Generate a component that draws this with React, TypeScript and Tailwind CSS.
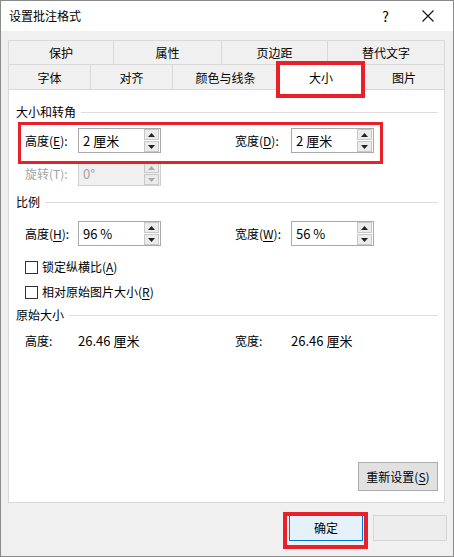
import React from 'react';

const font = { fontFamily: '"Noto Sans CJK SC", "Noto Sans", sans-serif' };

const Arrow = ({ up, disabled }: { up?: boolean; disabled?: boolean }) => (
  <svg width="7" height="4" viewBox="0 0 7 4">
    <path d={up ? 'M0 4 L3.5 0 L7 4 Z' : 'M0 0 L3.5 4 L7 0 Z'} fill={disabled ? '#a8a8a8' : '#222'} />
  </svg>
);

const Spin = ({ value, disabled }: { value: string; disabled?: boolean }) => (
  <div
    className={`w-[83px] h-[25px] border flex items-center justify-between ${
      disabled ? 'bg-[#f0f0f0] border-[#cfcfcf] text-[#a3a3a3]' : 'bg-white border-[#a9a9a9] text-black'
    }`}
  >
    <span className="pl-[4px] text-[13px] leading-none">{value}</span>
    <div className="flex flex-col gap-[1px] mr-[1px] h-[23px] w-[15px]">
      <div className="flex-1 flex items-center justify-center bg-[#ebebeb] border border-[#c8c8c8]">
        <Arrow up disabled={disabled} />
      </div>
      <div className="flex-1 flex items-center justify-center bg-[#ebebeb] border border-[#c8c8c8]">
        <Arrow disabled={disabled} />
      </div>
    </div>
  </div>
);

const Heading = ({ text }: { text: string }) => (
  <div className="h-[20px] flex items-center pl-[7px] pr-[6px] gap-[5px]">
    <span className="text-[12px] text-black whitespace-nowrap">{text}</span>
    <div className="flex-1 h-px bg-[#dcdcdc]" />
  </div>
);

const U = ({ c }: { c: string }) => <span className="underline underline-offset-2">{c}</span>;

const Check = ({ children }: { children: React.ReactNode }) => (
  <div className="h-[20px] flex items-center pl-[16px] gap-[4px] text-[12px]">
    <div className="w-[13px] h-[13px] border border-[#333] bg-white" />
    <span>{children}</span>
  </div>
);

export default function App() {
  const row1 = [
    { t: '保护', w: 'w-[105px]' },
    { t: '属性', w: 'w-[108px]' },
    { t: '页边距', w: 'w-[106px]' },
    { t: '替代文字', w: 'flex-1' },
  ];

  return (
    <div style={font} className="relative w-[454px] h-[557px] bg-[#f0f0f0] border border-[#8a8a8a] flex flex-col text-black overflow-hidden">
      {/* title bar */}
      <div className="h-[30px] bg-white flex items-center justify-between pl-[8px] pr-[19px] shrink-0">
        <span className="text-[12px]">设置批注格式</span>
        <div className="flex items-center gap-[33px]">
          <span className="text-[14px]">?</span>
          <svg width="12" height="12" viewBox="0 0 12 12">
            <path d="M0.5 0.5 L11.5 11.5 M11.5 0.5 L0.5 11.5" stroke="#111" strokeWidth="1.1" />
          </svg>
        </div>
      </div>

      <div className="flex-1 flex flex-col pt-[9px] pl-[7px] pr-[8px]">
        {/* tabs */}
        <div className="flex h-[24px] border-t border-l border-r border-[#d9d9d9] text-[12px]">
          {row1.map((tab, i) => (
            <div
              key={tab.t}
              className={`${tab.w} flex items-center justify-center ${i < 3 ? 'border-r border-[#d9d9d9]' : ''}`}
            >
              {tab.t}
            </div>
          ))}
        </div>
        <div className="flex h-[26px] border-t border-l border-r border-[#d9d9d9] text-[12px]">
          <div className="w-[82px] flex items-center justify-center border-r border-[#d9d9d9]">字体</div>
          <div className="w-[82px] flex items-center justify-center border-r border-[#d9d9d9]">对齐</div>
          <div className="w-[105px] flex items-center justify-center">颜色与线条</div>
          <div className="relative z-10 w-[86px] -mt-[3px] h-[30px] bg-white border-l border-r border-t border-[#d9d9d9] flex items-center justify-center">
            大小
          </div>
          <div className="flex-1 flex items-center justify-center">图片</div>
        </div>

        {/* panel */}
        <div className="h-[414px] -mt-px bg-white border border-[#d9d9d9] flex flex-col text-[12px]">
          <div className="mt-[12px]">
            <Heading text="大小和转角" />
          </div>
          <div className="mt-[6px] flex items-center h-[25px] pl-[16px]">
            <span className="w-[53px]">高度(<U c="E" />):</span>
            <Spin value="2 厘米" />
            <span className="ml-[74px] w-[56px]">宽度(<U c="D" />):</span>
            <Spin value="2 厘米" />
          </div>
          <div className="mt-[8px] flex items-center h-[25px] pl-[16px]">
            <span className="w-[53px] text-[#a3a3a3]">旋转(T):</span>
            <Spin value="0°" disabled />
          </div>
          <div className="mt-[6px]">
            <Heading text="比例" />
          </div>
          <div className="mt-[9px] flex items-center h-[25px] pl-[16px]">
            <span className="w-[53px]">高度(<U c="H" />):</span>
            <Spin value="96 %" />
            <span className="ml-[74px] w-[56px]">宽度(<U c="W" />):</span>
            <Spin value="56 %" />
          </div>
          <div className="mt-[11px]">
            <Check>锁定纵横比(<U c="A" />)</Check>
          </div>
          <div className="mt-[5px]">
            <Check>相对原始图片大小(<U c="R" />)</Check>
          </div>
          <div className="mt-[3px]">
            <Heading text="原始大小" />
          </div>
          <div className="mt-[6px] flex items-center h-[20px] pl-[16px]">
            <span className="w-[53px]">高度:</span>
            <span className="w-[83px] text-[13px]">26.46 厘米</span>
            <span className="ml-[74px] w-[56px]">宽度:</span>
            <span className="text-[13px]">26.46 厘米</span>
          </div>
          <div className="flex-1" />
          <div className="flex justify-end pr-[6px] pb-[11px]">
            <div className="w-[80px] h-[29px] bg-[#e1e1e1] border border-[#adadad] flex items-center justify-center text-[12px]">
              重新设置(<U c="S" />)
            </div>
          </div>
        </div>

        {/* bottom buttons */}
        <div className="flex justify-end gap-[10px] mt-[12px] -mr-[2px]">
          <div className="w-[74px] h-[26px] bg-[#e5f1fb] border border-[#0078d7] flex items-center justify-center text-[12px]">
            确定
          </div>
          <div className="w-[74px] h-[26px] bg-[#ededed] border border-[#d6d6d6]" />
        </div>
      </div>

      {/* red annotation boxes */}
      <div className="absolute left-[275px] top-[60px] w-[89px] h-[37px] border-[4px] border-[#e8202a] z-20" />
      <div className="absolute left-[17px] top-[121px] w-[365px] h-[42px] border-[3px] border-[#e8202a] z-20" />
      <div className="absolute left-[282px] top-[511px] w-[85px] h-[37px] border-[4px] border-[#e8202a] z-20" />
    </div>
  );
}
